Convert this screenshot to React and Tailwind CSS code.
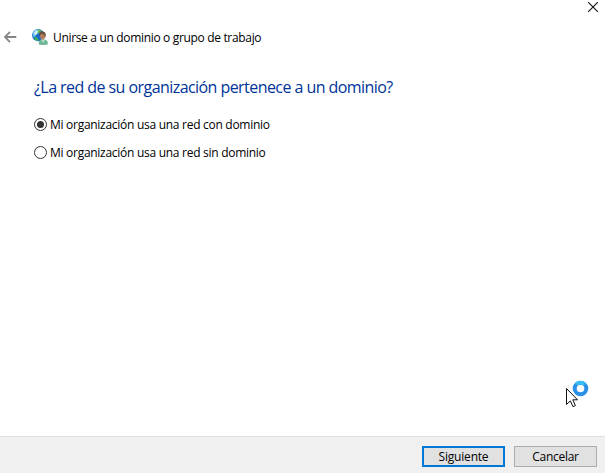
function BackArrow() {
  return (
    <svg className="h-[13px] w-[13px]" viewBox="0 0 13 13" fill="none" stroke="#858585" strokeWidth="1.8">
      <path d="M12.3 6H1.2M6 .8L.9 6L6 11.2" />
    </svg>
  );
}

function NetworkIcon() {
  return (
    <svg className="h-4 w-4" viewBox="0 0 16 16">
      <circle cx="6.2" cy="6.2" r="6.1" fill="#1d68cc" />
      <path d="M1.2 3C2.8.6 5.5 0 7.8.5L6.5 3L4.4 6L2 8.6C.5 7.4.2 5 1.2 3Z" fill="#68bdf0" />
      <path d="M2.5 3L4.6 1.3L6.2 2.2L5.1 4.5L3.5 6L2.2 5Z" fill="#d9f5f3" />
      <path d="M6 .7L8.5.8L9.3 2L7.2 3.7L6.7 5.2L5.8 4.1Z" fill="#65ba4c" />
      <path d="M2.1 8L4.7 8.2L6.4 10.2L5.8 12.2C4.1 11.8 2.7 10.5 2.1 8Z" fill="#38b54d" />
      <path d="M6.8 15.5C6.4 12.4 8.1 10.3 10.3 10.1L13.2 10.5C15.2 11.2 16 13 15.8 15.2C13.5 16.2 9.4 16.3 6.8 15.5Z" fill="#70b895" />
      <path d="M9.5 10.2L11 14L13 10.4Z" fill="#c6e2d3" />
      <ellipse cx="10.6" cy="7" rx="2.5" ry="3.4" fill="#b87c5b" />
      <path d="M7.7 6.8C6.8 3.5 8.8 2.1 11 2.4C14 2.8 14.5 5.7 13 9.3L12.4 5.8L9.3 4.8Z" fill="#66503e" />
    </svg>
  );
}

function Radio({ checked, children }) {
  return (
    <label className="flex h-4 items-center">
      <svg className="h-[13px] w-[13px]" viewBox="0 0 13 13">
        <circle cx="6.5" cy="6.5" r="6" fill="white" stroke="#333" />
        {checked && <circle cx="6.5" cy="6.5" r="3.5" fill="#333" />}
      </svg>
      <span className="ml-[3px] pt-px text-[12px] leading-4 tracking-[-0.28px] whitespace-nowrap">{children}</span>
    </label>
  );
}

function BusyCursor() {
  return (
    <svg className="absolute top-[380px] left-[565px] h-7 w-6" viewBox="0 0 24 28">
      <path d="M1.5 8.5V24.5L5.3 20.9L8 26.7L10.4 25.6L7.8 19.8H12.5Z" fill="white" stroke="#111" />
      <circle cx="15.5" cy="8.5" r="5.8" fill="none" stroke="#2b91e8" strokeWidth="4" />
      <path d="M11.4 4.4A5.8 5.8 0 0 1 19.6 4.4" fill="none" stroke="#36bdf2" strokeWidth="4" />
    </svg>
  );
}

export default function App() {
  return (
    <div className="relative flex h-[473px] w-[605px] flex-col overflow-hidden bg-white font-['Open_Sans','Noto_Sans',sans-serif] text-[12px] text-black">
      <div className="flex h-[28px] justify-end pt-[2px] pr-[7px]">
        <svg className="h-[10px] w-[10px]" viewBox="0 0 10 10" fill="none" stroke="#111" strokeWidth="1.1">
          <path d="M0 0L10 10M10 0L0 10" />
        </svg>
      </div>
      <header className="flex h-[19px] items-center pl-[4px]">
        <BackArrow />
        <div className="-mt-px ml-[15px]"><NetworkIcon /></div>
        <h1 className="ml-[5px] text-[12px] leading-[18px] tracking-[-0.33px] whitespace-nowrap">Unirse a un dominio o grupo de trabajo</h1>
      </header>
      <main className="flex-1 pt-[28px] pl-[34px]">
        <h2 className="h-6 text-[16px] leading-6 tracking-[-0.56px] whitespace-nowrap text-[#003399]">¿La red de su organización pertenece a un dominio?</h2>
        <div className="mt-[17px] flex flex-col gap-3">
          <Radio checked>Mi organización usa una red con dominio</Radio>
          <Radio>Mi organización usa una red sin dominio</Radio>
        </div>
      </main>
      <footer className="flex h-[37px] justify-end gap-[9px] border-t border-[#dfdfdf] bg-[#f0f0f0] pt-[9px] pr-2">
        <button className="h-[21px] w-[83px] border-2 border-[#0078d7] bg-[#e1e1e1] leading-[17px] tracking-[-0.2px]">Siguiente</button>
        <button className="h-[21px] w-[83px] border border-[#adadad] bg-[#e1e1e1] leading-[19px] tracking-[-0.3px]">Cancelar</button>
      </footer>
      <BusyCursor />
    </div>
  );
}
